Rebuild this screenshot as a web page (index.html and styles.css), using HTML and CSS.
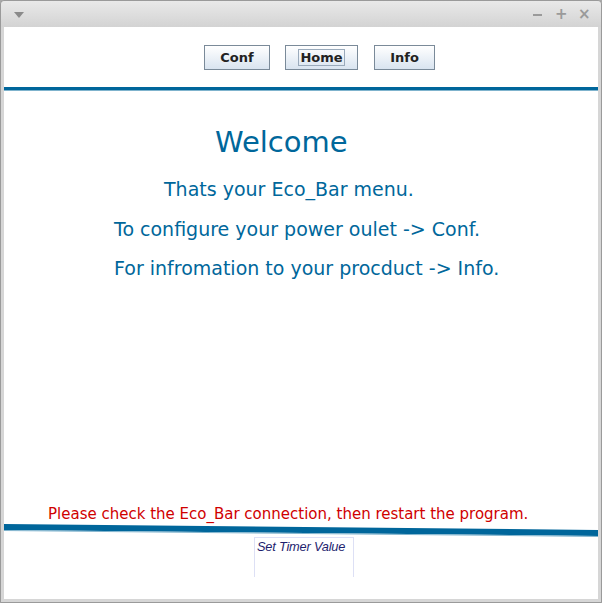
FILE: index.html
```html
<!DOCTYPE html>
<html>
<head>
<meta charset="utf-8">
<link rel="stylesheet" href="styles.css">
</head>
<body>
<div class="window">
  <div class="titlebar">
    <span class="menu-arrow"></span>
    <div class="controls">
      <span class="ctl minus"></span>
      <span class="ctl">+</span>
      <span class="ctl">&#215;</span>
    </div>
  </div>
  <div class="content">
    <div class="nav">
      <button class="btn">Conf</button>
      <button class="btn btn-home"><span class="focus">Home</span></button>
      <button class="btn btn-info">Info</button>
    </div>
    <div class="rule"></div>
    <div class="main">
      <div class="welcome">Welcome</div>
      <div class="line l1">Thats your Eco_Bar menu.</div>
      <div class="line l2">To configure your power oulet -&gt; Conf.</div>
      <div class="line l3">For infromation to your procduct -&gt; Info.</div>
    </div>
    <div class="status">Please check the Eco_Bar connection, then restart the program.</div>
    <svg class="slant" width="594" height="14" viewBox="0 0 594 14">
      <polygon points="0,0 594,6 594,12 0,6" fill="#00669b"/>
      <polygon points="0,6 594,12 594,13 0,7" fill="#7fb3cd"/>
    </svg>
    <div class="timer">Set Timer Value</div>
  </div>
</div>
</body>
</html>
```
FILE: styles.css
```css
html, body {
  margin: 0;
  padding: 0;
}
body {
  width: 602px;
  height: 603px;
  overflow: hidden;
  background: #a9a9a9;
  font-family: "DejaVu Sans", sans-serif;
}
.window {
  width: 602px;
  height: 603px;
  box-sizing: border-box;
  background: #d6d6d6;
  border: 1px solid #9a9a9a;
  border-radius: 4px 4px 0 0;
  padding: 0 3px 3px 3px;
  display: flex;
  flex-direction: column;
}
.titlebar {
  height: 26px;
  flex: none;
  display: flex;
  align-items: center;
  justify-content: space-between;
  background: linear-gradient(#e9e9e9, #d3d3d3);
  margin: 0 -3px;
  padding: 0 12px 0 12px;
  border-radius: 4px 4px 0 0;
}
.menu-arrow {
  width: 0;
  height: 0;
  border-left: 5px solid transparent;
  border-right: 5px solid transparent;
  border-top: 6px solid #8a8a8a;
  margin-left: 1px;
  margin-top: 1px;
}
.controls {
  display: flex;
  align-items: center;
  gap: 12px;
  color: #9a9a9a;
  font-weight: bold;
  font-size: 15px;
  margin-top: -1px;
}
.ctl {
  width: 11px;
  text-align: center;
}
.minus {
  width: 9px;
  height: 2px;
  background: #9a9a9a;
  margin: 3px 1px 0 1px;
}
.content {
  flex: 1;
  background: #ffffff;
  display: flex;
  flex-direction: column;
  position: relative;
}
.nav {
  display: flex;
  justify-content: flex-start;
  padding: 18px 0 0 200px;
  height: 25px;
}
.btn {
  height: 25px;
  box-sizing: border-box;
  border: 1px solid #7a8a99;
  background: linear-gradient(#ffffff, #d9e4f0);
  font-family: "DejaVu Sans", sans-serif;
  font-weight: bold;
  font-size: 13px;
  color: #222222;
  padding: 0;
  width: 66px;
  display: flex;
  align-items: center;
  justify-content: center;
}
.btn-home {
  width: 73px;
  margin-left: 15px;
}
.focus {
  border: 1px solid #9aaabb;
  padding: 0 1px;
  line-height: 15px;
}
.btn-info {
  width: 61px;
  margin-left: 16px;
}
.rule {
  height: 3px;
  background: #00669b;
  border-bottom: 1px solid #7fb3cd;
  margin-top: 17px;
}
.main {
  flex: 1;
  color: #00679b;
}
.welcome {
  font-size: 29px;
  margin: 34px 0 0 211px;
  line-height: 34px;
}
.line {
  font-size: 19px;
  line-height: 22px;
}
.l1 { margin: 19px 0 0 160px; }
.l2 { margin: 18px 0 0 110px; }
.l3 { margin: 17px 0 0 110px; }
.status {
  color: #d00000;
  font-size: 15px;
  margin-left: 44px;
  line-height: 18px;
  margin-bottom: 1px;
}
.slant {
  display: block;
  flex: none;
}
.timer {
  width: 100px;
  height: 40px;
  box-sizing: border-box;
  margin: -1px 0 22px 250px;
  border: 1px solid #dde0f5;
  border-bottom: none;
  font-family: "Liberation Sans", sans-serif;
  font-style: italic;
  font-size: 12.8px;
  color: #1e1e6e;
  padding: 1px 0 0 2px;
  letter-spacing: -0.2px;
}
```
